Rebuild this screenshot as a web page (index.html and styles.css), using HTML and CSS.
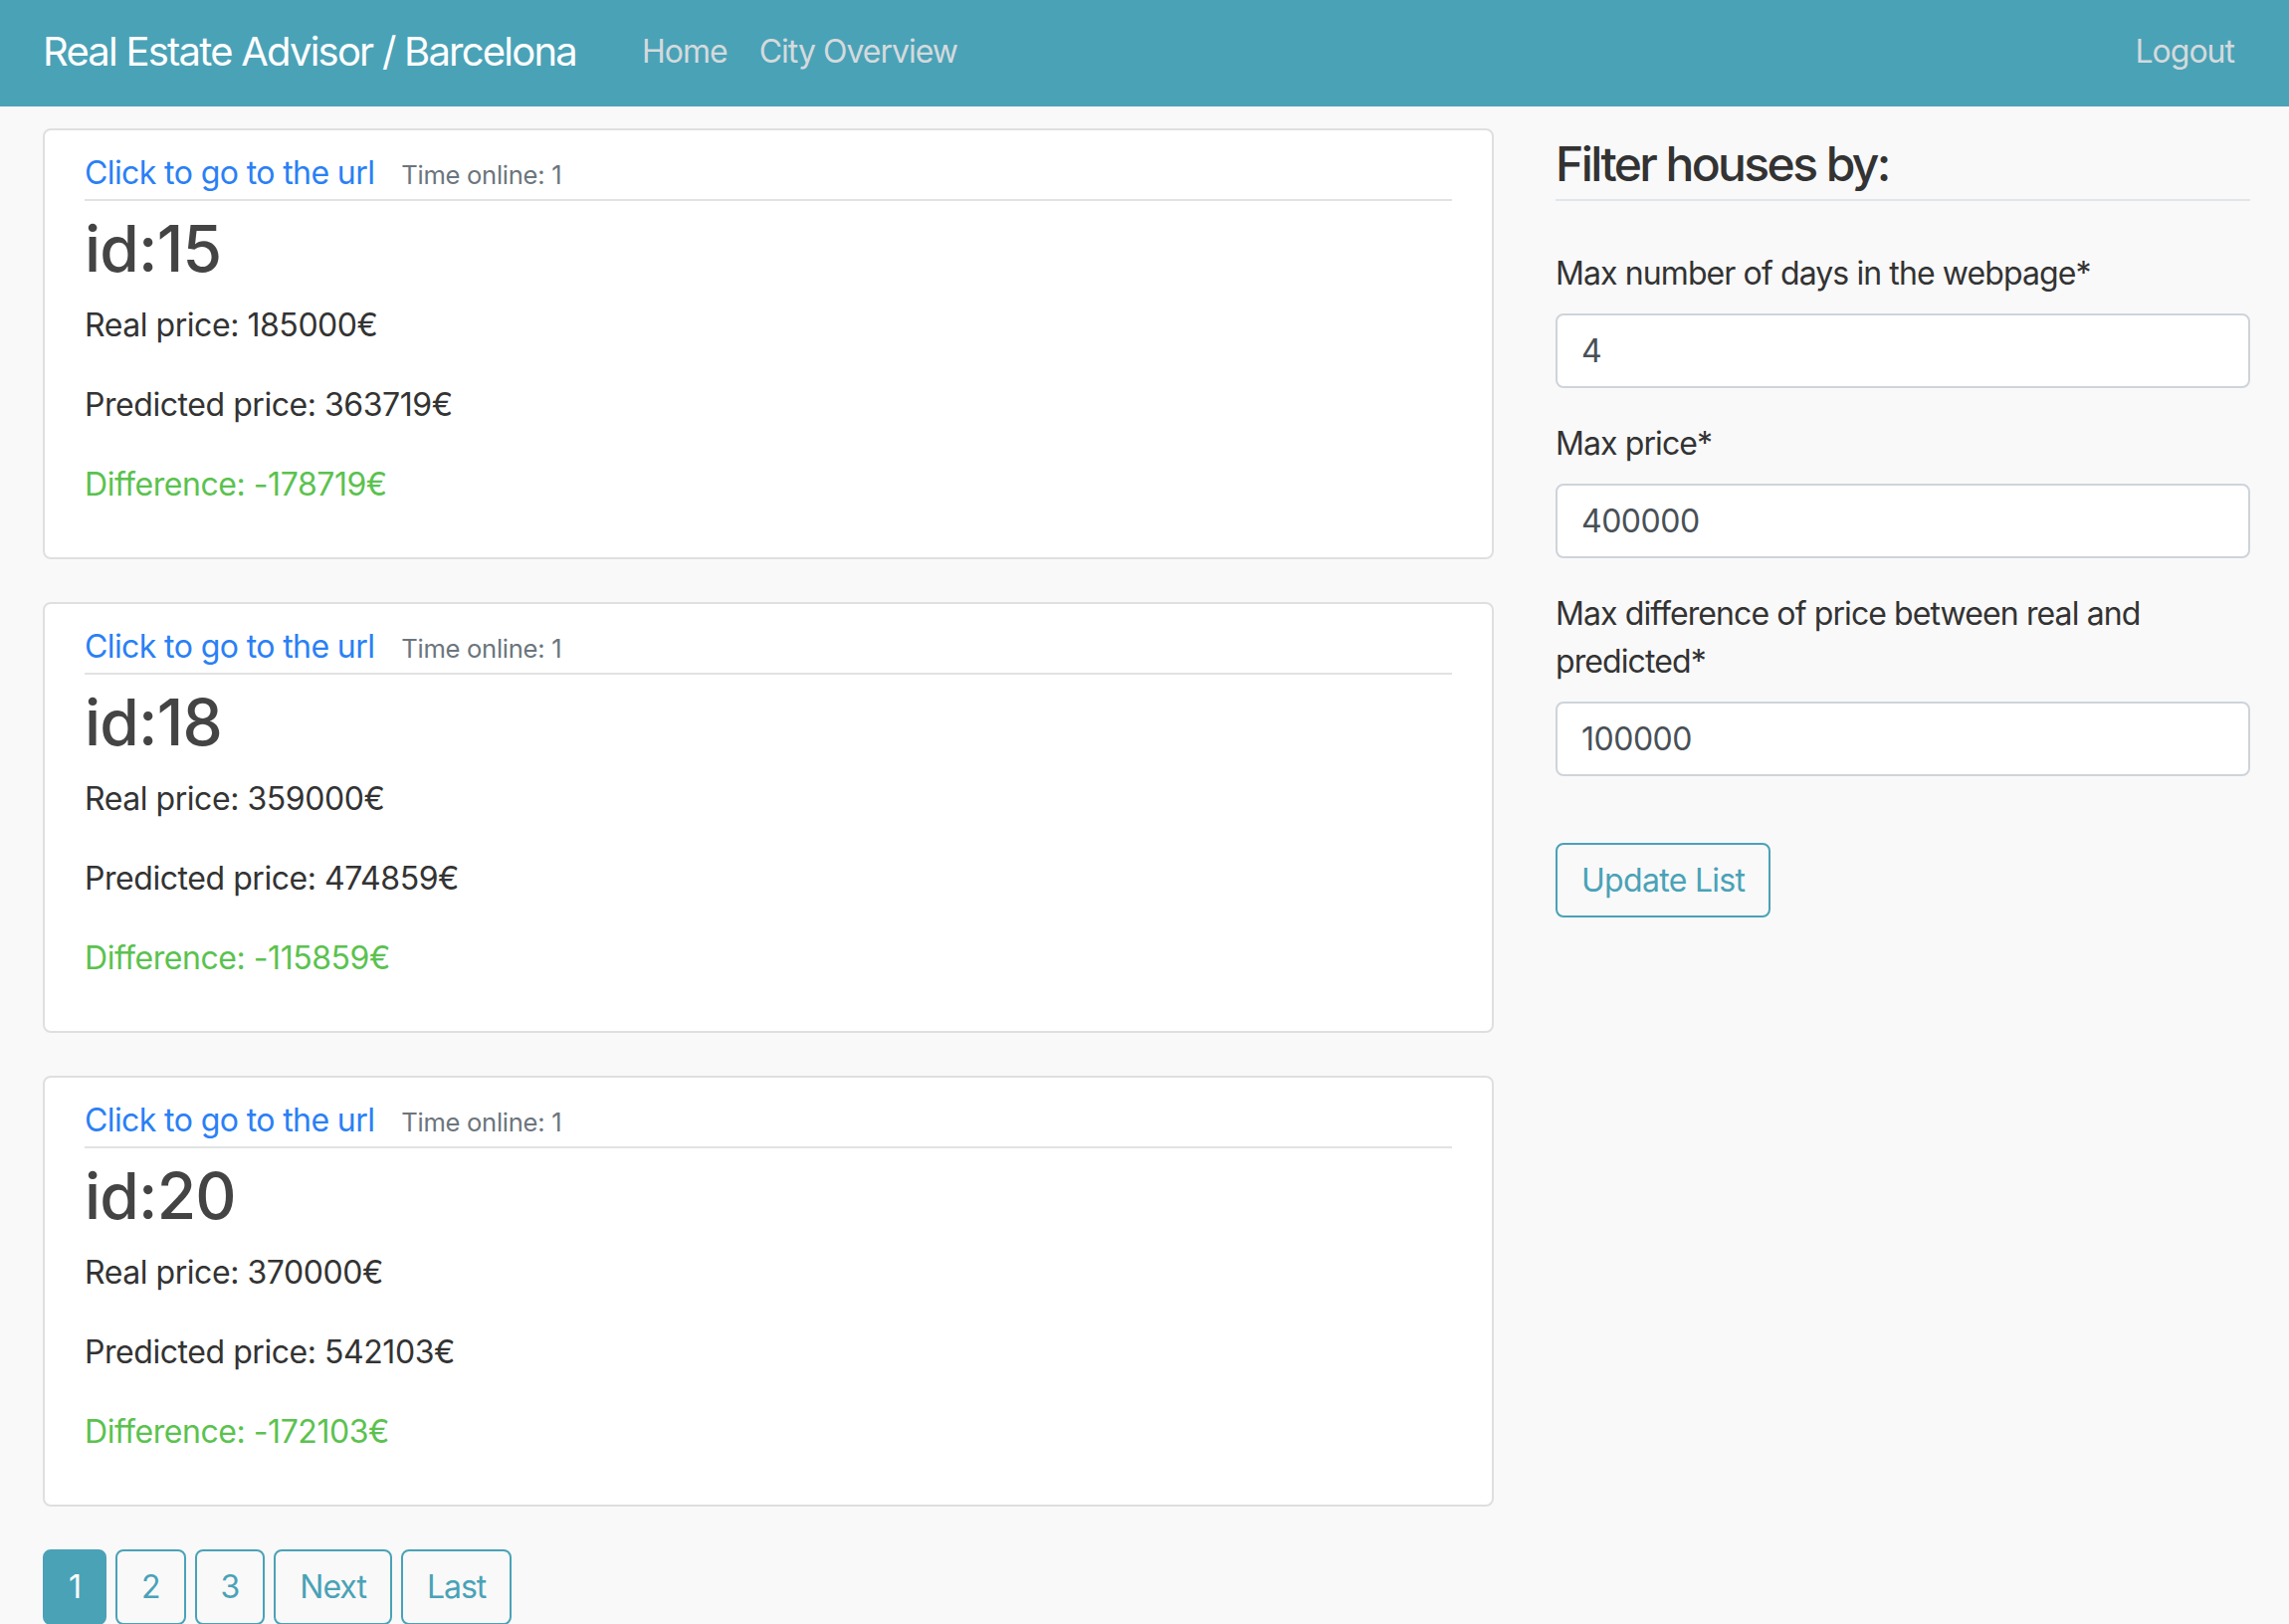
FILE: index.html
```html
<!DOCTYPE html>
<html lang="en">
<head>
<meta charset="utf-8">
<title>Real Estate Advisor / Barcelona</title>
<link rel="stylesheet" href="styles.css">
</head>
<body>
<nav class="navbar">
  <a class="brand" href="#">Real Estate Advisor / Barcelona</a>
  <ul class="nav">
    <li><a class="nav-link" href="#">Home</a></li>
    <li><a class="nav-link" href="#">City Overview</a></li>
  </ul>
  <a class="nav-link logout" href="#">Logout</a>
</nav>
<main class="page">
  <section class="listing">
    <article class="card">
      <div class="card-head">
        <a class="url" href="#">Click to go to the url</a>
        <span class="muted">Time online: 1</span>
      </div>
      <h2 class="house-id">id:15</h2>
      <p>Real price: 185000€</p>
      <p>Predicted price: 363719€</p>
      <p class="diff">Difference: -178719€</p>
    </article>
    <article class="card">
      <div class="card-head">
        <a class="url" href="#">Click to go to the url</a>
        <span class="muted">Time online: 1</span>
      </div>
      <h2 class="house-id">id:18</h2>
      <p>Real price: 359000€</p>
      <p>Predicted price: 474859€</p>
      <p class="diff">Difference: -115859€</p>
    </article>
    <article class="card">
      <div class="card-head">
        <a class="url" href="#">Click to go to the url</a>
        <span class="muted">Time online: 1</span>
      </div>
      <h2 class="house-id">id:20</h2>
      <p>Real price: 370000€</p>
      <p>Predicted price: 542103€</p>
      <p class="diff">Difference: -172103€</p>
    </article>
    <div class="pagination">
      <a class="page-btn active" href="#">1</a>
      <a class="page-btn" href="#">2</a>
      <a class="page-btn" href="#">3</a>
      <a class="page-btn" href="#">Next</a>
      <a class="page-btn" href="#">Last</a>
    </div>
  </section>
  <aside class="filters">
    <h4 class="filters-title">Filter houses by:</h4>
    <form class="filter-form">
      <div class="form-group">
        <label for="days">Max number of days in the webpage*</label>
        <input id="days" class="form-control" type="text" value="4">
      </div>
      <div class="form-group">
        <label for="price">Max price*</label>
        <input id="price" class="form-control" type="text" value="400000">
      </div>
      <div class="form-group">
        <label for="diff">Max difference of price between real and predicted*</label>
        <input id="diff" class="form-control" type="text" value="100000">
      </div>
      <button class="btn-update" type="button">Update List</button>
    </form>
  </aside>
</main>
</body>
</html>
```

FILE: styles.css
```css
* {
  box-sizing: border-box;
}

body {
  margin: 0;
  background: #f9f9f9;
  font-family: Inter, "Noto Sans", sans-serif;
  font-size: 32px;
  line-height: 48px;
  color: #333333;
}

.navbar {
  display: flex;
  align-items: center;
  height: 107px;
  padding: 0 39px 4px 43px;
  background: #4aa2b7;
}

.brand {
  font-size: 40px;
  line-height: normal;
  letter-spacing: -1.77px;
  color: #ffffff;
  text-decoration: none;
  margin-right: 50px;
}

.nav {
  display: flex;
  flex: 1;
  list-style: none;
  margin: 0;
  padding: 0;
}

.nav-link {
  display: block;
  padding: 0 16px;
  font-size: 32px;
  line-height: normal;
  letter-spacing: -1px;
  color: #d4dadd;
  text-decoration: none;
}

.page {
  display: grid;
  grid-template-columns: 1458px 698px;
  column-gap: 62px;
  padding: 22px 39px 0 43px;
}

.card {
  background: #ffffff;
  border: 2px solid #dfdfdf;
  border-radius: 8px;
  padding: 19px 40px 49px;
  margin-bottom: 43px;
}

.card-head {
  display: flex;
  align-items: baseline;
  gap: 27px;
  padding-bottom: 2px;
  border-bottom: 2px solid #e2e2e2;
}

.url {
  color: #2a80f5;
  letter-spacing: -0.6px;
  text-decoration: none;
}

.muted {
  font-size: 25.6px;
  line-height: 1;
  letter-spacing: -0.3px;
  color: #6c757d;
}

.house-id {
  margin: 9px 0 15px;
  font-size: 64px;
  line-height: 77px;
  font-weight: 500;
  letter-spacing: -0.8px;
  color: #444444;
}

.card p {
  margin: 0 0 32px;
  letter-spacing: -0.45px;
}

.card p.diff {
  margin-bottom: 0;
  color: #5bc24f;
}

.pagination {
  display: flex;
  gap: 9px;
}

.page-btn {
  display: block;
  height: 76px;
  padding: 12px 24px;
  border: 2px solid #4aa2b7;
  border-radius: 8px;
  letter-spacing: -1px;
  color: #4aa2b7;
  text-decoration: none;
}

.page-btn.active {
  background: #4aa2b7;
  color: #ffffff;
}

.filters-title {
  margin: 7px 0 0;
  padding-bottom: 6px;
  border-bottom: 2px solid #e3e6e9;
  font-size: 48px;
  line-height: 57.6px;
  font-weight: 500;
  letter-spacing: -2.6px;
  color: #333333;
}

.filter-form {
  padding-top: 49px;
}

.form-group {
  margin-bottom: 32px;
}

.form-group label {
  display: block;
  margin-bottom: 16px;
  letter-spacing: -0.9px;
}

.form-control {
  display: block;
  width: 100%;
  height: 75px;
  padding: 0 24px;
  border: 2px solid #ced4da;
  border-radius: 8px;
  background: #ffffff;
  font-family: inherit;
  font-size: 32px;
  letter-spacing: -0.5px;
  color: #495057;
}

.btn-update {
  height: 75px;
  margin-top: 35px;
  padding: 0 24px;
  border: 2px solid #4aa2b7;
  border-radius: 8px;
  background: transparent;
  font-family: inherit;
  font-size: 32px;
  letter-spacing: -0.7px;
  color: #4aa2b7;
}
```
